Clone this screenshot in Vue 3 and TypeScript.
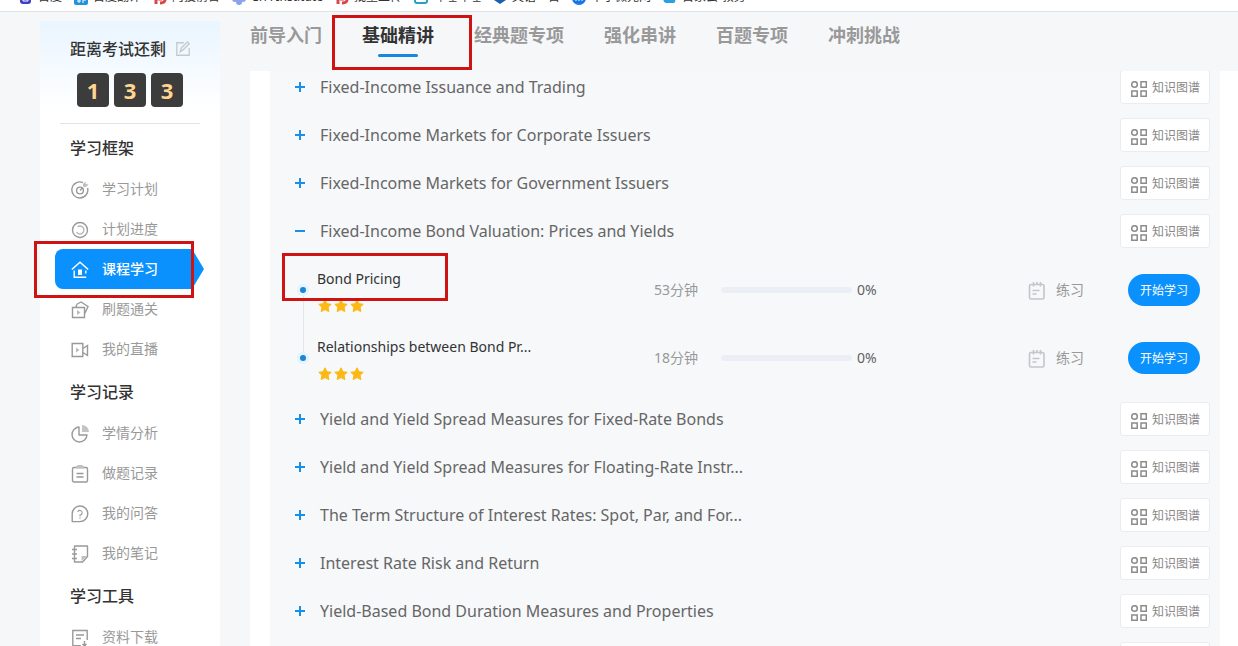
<script setup lang="ts">
import { ref } from 'vue'

interface MenuItem { icon: string; label: string; active?: boolean }
interface MenuGroup { title: string; items: MenuItem[] }
interface Lesson { title: string; minutes: number; percent: number; marked?: boolean }
interface Chapter { title: string; lessons?: Lesson[] }

const bookmarks = [
  { icon: 'paw', label: '百度' },
  { icon: 'translate', label: '百度翻译' },
  { icon: 'red', label: '阿投前台' },
  { icon: 'flower', label: 'CFA Institute' },
  { icon: 'red', label: '批量上传' },
  { icon: 'tv', label: '哔哩哔哩' },
  { icon: 'shield', label: '英语一百' },
  { icon: 'round', label: '中小微元网' },
  { icon: 'cloud', label: '百家云-教务' },
]

const daysLeft = ['1', '3', '3']

const groups: MenuGroup[] = [
  {
    title: '学习框架',
    items: [
      { icon: 'target', label: '学习计划' },
      { icon: 'progress', label: '计划进度' },
      { icon: 'home', label: '课程学习', active: true },
      { icon: 'cards', label: '刷题通关' },
      { icon: 'video', label: '我的直播' },
    ],
  },
  {
    title: '学习记录',
    items: [
      { icon: 'pie', label: '学情分析' },
      { icon: 'clipboard', label: '做题记录' },
      { icon: 'question', label: '我的问答' },
      { icon: 'note', label: '我的笔记' },
    ],
  },
  { title: '学习工具', items: [{ icon: 'download', label: '资料下载' }] },
]

const tabs = ['前导入门', '基础精讲', '经典题专项', '强化串讲', '百题专项', '冲刺挑战']
const activeTab = ref('基础精讲')

const chapters: Chapter[] = [
  { title: 'Fixed-Income Issuance and Trading' },
  { title: 'Fixed-Income Markets for Corporate Issuers' },
  { title: 'Fixed-Income Markets for Government Issuers' },
  {
    title: 'Fixed-Income Bond Valuation: Prices and Yields',
    lessons: [
      { title: 'Bond Pricing', minutes: 53, percent: 0, marked: true },
      { title: 'Relationships between Bond Pr...', minutes: 18, percent: 0 },
    ],
  },
  { title: 'Yield and Yield Spread Measures for Fixed-Rate Bonds' },
  { title: 'Yield and Yield Spread Measures for Floating-Rate Instr...' },
  { title: 'The Term Structure of Interest Rates: Spot, Par, and For...' },
  { title: 'Interest Rate Risk and Return' },
  { title: 'Yield-Based Bond Duration Measures and Properties' },
  { title: '' },
]
</script>

<template>
  <div class="page">
    <nav class="bookmarks">
      <a v-for="b in bookmarks" :key="b.label" href="#" class="bookmark">
        <svg class="fav" viewBox="0 0 14 14" aria-hidden="true">
          <template v-if="b.icon === 'paw'">
            <rect x="1" width="11" height="13" rx="3" fill="#3a3fc4" /><path d="M4 10V7h5v3z" fill="none" stroke="#fff" />
          </template>
          <template v-else-if="b.icon === 'translate'">
            <rect width="14" height="14" rx="2" fill="#2193dc" /><path d="M3 10h4M5 6v6M9 6v6M9 9h3" stroke="#fff" fill="none" />
          </template>
          <path v-else-if="b.icon === 'red'" d="M3 13V4M7 12c5 0 6-3 4-6M5 8h4" stroke="#d9474b" stroke-width="3" fill="none" />
          <g v-else-if="b.icon === 'flower'" fill="#8aa3ea">
            <circle cx="3" cy="8" r="3" /><circle cx="7" cy="11" r="3" /><circle cx="11" cy="8" r="3" /><circle cx="7" cy="5" r="3" />
          </g>
          <rect v-else-if="b.icon === 'tv'" x="1" y="3" width="12" height="9" rx="2" fill="none" stroke="#2c9fc4" stroke-width="2" />
          <path v-else-if="b.icon === 'shield'" d="M1 3l6 2 6-2v6l-6 4-6-4z" fill="#1d5fae" />
          <template v-else-if="b.icon === 'round'">
            <circle cx="7" cy="7" r="7" fill="#1a76e8" /><path d="M4 6v4M7 6v4M10 6v4" stroke="#fff" />
          </template>
          <path v-else d="M3 12a3 3 0 0 1 1-6 4 4 0 0 1 7 1 3 3 0 0 1 0 5z" fill="#2c9fe0" />
        </svg>
        <span>{{ b.label }}</span>
      </a>
    </nav>

    <div class="body">
      <aside class="sidebar">
        <header class="countdown">
          <div class="count-title">
            <span>距离考试还剩</span>
            <button class="edit" type="button" aria-label="编辑">
              <svg viewBox="0 0 18 18"><path d="M10 2H2v14h14V8M6 12l1-4 7-7 2 2-7 7z" fill="none" stroke="#c4c9ce" stroke-width="1.5" /></svg>
            </button>
          </div>
          <div class="digits">
            <span v-for="(d, i) in daysLeft" :key="i" class="digit">{{ d }}</span>
          </div>
        </header>

        <section v-for="g in groups" :key="g.title" class="group">
          <h2>{{ g.title }}</h2>
          <a v-for="m in g.items" :key="m.label" href="#" class="item" :class="{ active: m.active }">
            <svg class="icon" viewBox="0 0 18 18" aria-hidden="true" fill="none" stroke="currentColor" stroke-width="1.4">
              <template v-if="m.icon === 'target'">
                <path d="M12 1.6A8 8 0 1 0 16.6 7" /><circle cx="9" cy="9.5" r="3.4" /><path d="M9 9.5l3-3" />
                <path d="M12 5.5V3l2.5-2.5v2.700H17.500L15 6z" fill="#bbb" stroke="none" />
              </template>
              <template v-else-if="m.icon === 'progress'">
                <circle cx="9" cy="9" r="7.500" /><path d="M6.500 5.800A4 4 0 1 1 5.500 11" opacity=".7" />
              </template>
              <template v-else-if="m.icon === 'home'">
                <path d="M.8 8.500L9 1.200l8.200 7.300M3.200 9.500v6.700h12M14.800 9.500v3" /><path d="M7 8.500h4V14H7z" fill="currentColor" stroke="none" />
              </template>
              <template v-else-if="m.icon === 'cards'">
                <path d="M1.500 6.500h12v10h-12zM5 6l.8-2.200M5.500 3.500L10 1l7 4.500-3.200 7" /><path d="M6 9l3.500 2.500L6 14z" fill="#bbb" stroke="none" />
              </template>
              <template v-else-if="m.icon === 'video'">
                <path d="M1.200 2.500h10.600v13H1.200zM12 7.500l4.500-3v10l-4.500-3" /><path d="M5 6.500L8.500 9 5 11.500z" fill="#bbb" stroke="none" />
              </template>
              <template v-else-if="m.icon === 'pie'">
                <path d="M8 2a7.500 7.500 0 1 0 8 8H8z" stroke-linejoin="round" /><path d="M11 0a7 7 0 0 1 7 7h-7z" fill="#c4c4c4" stroke="none" />
              </template>
              <template v-else-if="m.icon === 'clipboard'">
                <rect x="1.500" y="2.500" width="15" height="14.500" rx="1.500" /><path d="M5.500 8.500h7M5.500 12h7" /><path d="M5 3.500V1.500l2-1.500h4l2 1.500v2z" fill="#c0c0c0" stroke="none" />
              </template>
              <template v-else-if="m.icon === 'question'">
                <path d="M1.200 16.600V9a7.800 7.800 0 1 1 7.800 7.600z" stroke-linejoin="round" /><path d="M6.700 7a2.300 2.300 0 1 1 2.300 3v1.500M9 12.500v1.200" stroke-width="1.100" />
              </template>
              <template v-else-if="m.icon === 'note'">
                <path d="M3.500 1h13v10.500L11.500 17h-8zM1 4.500h5M1 9h5M1 13.500h5" stroke-linejoin="round" /><path d="M10.500 16v-5H16z" fill="#c0c0c0" stroke="none" />
              </template>
              <template v-else>
                <path d="M16.200 11V1.500H1.800v15.200h8M5 6h8M5 9.500h5M13.500 12v5M11.500 15l2 2 2-2" />
              </template>
            </svg>
            <span class="label">{{ m.label }}</span>
            <i v-if="m.active" class="marker marker-menu"></i>
          </a>
        </section>
      </aside>

      <main class="main">
        <nav class="tabs">
          <button v-for="t in tabs" :key="t" type="button" class="tab" :class="{ on: t === activeTab }" @click="activeTab = t">
            {{ t }}
            <i v-if="t === '基础精讲'" class="marker marker-tab"></i>
          </button>
        </nav>

        <div class="panel">
          <div class="list">
            <section v-for="c in chapters" :key="c.title">
              <div class="chapter">
                <button type="button" class="toggle" :aria-label="c.lessons ? '收起' : '展开'">
                  <svg viewBox="0 0 10 10"><path :d="c.lessons ? 'M0 5h10' : 'M0 5h10M5 0v10'" stroke="#1890e8" stroke-width="2" /></svg>
                </button>
                <h3>{{ c.title }}</h3>
                <button type="button" class="graph">
                  <svg viewBox="0 0 16 16" fill="none" stroke="#8c8c8c" stroke-width="1.500">
                    <circle cx="3.500" cy="3.500" r="2.800" /><path d="M10 .8h5.300v5.400H10zM.8 10h5.400v5.300H.8zM10 10h5.300v5.300H10z" />
                  </svg>
                  知识图谱
                </button>
              </div>
              <ul v-if="c.lessons" class="lessons">
                <li v-for="l in c.lessons" :key="l.title" class="lesson">
                  <span class="dot"></span>
                  <div class="info">
                    <h4>{{ l.title }}</h4>
                    <div class="stars">
                      <svg v-for="n in 3" :key="n" viewBox="0 0 14 14"><path d="M7 .8l1.900 3.900 4.300.6-3.100 3 .7 4.300L7 10.600l-3.800 2 .7-4.300-3.100-3 4.300-.6z" fill="#fdb813" stroke="#fdb813" stroke-linejoin="round" /></svg>
                    </div>
                    <i v-if="l.marked" class="marker marker-lesson"></i>
                  </div>
                  <span class="time">{{ l.minutes }}分钟</span>
                  <div class="track"><div class="fill" :style="{ width: l.percent + '%' }"></div></div>
                  <span class="percent">{{ l.percent }}%</span>
                  <a href="#" class="practice">
                    <svg viewBox="0 0 18 18" fill="none" stroke="#c3c6ca" stroke-width="1.600"><rect x="1.500" y="2.500" width="14.500" height="14.500" rx="1.500" /><path d="M5.500 0v4.500M9 0v3M12.500 0v4.500M4.500 8.500h7M4.500 12h4" /></svg>
                    <span class="label">练习</span>
                  </a>
                  <button type="button" class="start">开始学习</button>
                </li>
              </ul>
            </section>
          </div>
        </div>
      </main>
    </div>
  </div>
</template>

<style>
body { margin: 0; background: #f6f7f9; }
</style>

<style scoped>
* { box-sizing: border-box; }
.page {
  display: flex;
  flex-direction: column;
  height: 100vh;
  overflow: hidden;
  background: #f6f7f9;
  color: #333;
  font-family: "Noto Sans", "Noto Sans CJK SC", sans-serif;
  font-size: 14px;
}
button { margin: 0; padding: 0; border: 0; background: none; color: inherit; font: inherit; cursor: pointer; }
a { color: inherit; text-decoration: none; }
h2, h3, h4, ul { margin: 0; padding: 0; font-weight: 400; list-style: none; }
svg { display: block; flex: none; }

.bookmarks {
  flex: none;
  display: flex;
  align-items: flex-end;
  gap: 12px;
  height: 12px;
  padding: 0 19px 6px;
  overflow: hidden;
  background: #fff;
  border-bottom: 1px solid #dfe2e5;
}
.bookmark { display: flex; flex: none; align-items: flex-end; gap: 5px; font-size: 12px; line-height: 16px; white-space: nowrap; }
.fav { width: 14px; height: 14px; }

.body { flex: 1; display: flex; gap: 30px; min-height: 0; padding-left: 40px; }
.sidebar {
  flex: none;
  width: 180px;
  margin-top: 9px;
  background: linear-gradient(#e9f5ff, #fff 90px);
}
.countdown { margin: 0 20px 1px; padding: 16px 0 16px 10px; border-bottom: 1px solid #e2e4e7; }
.count-title { display: flex; align-items: center; gap: 9px; font-size: 16px; font-weight: 500; line-height: 24px; white-space: nowrap; }
.edit svg { width: 16px; height: 16px; }
.digits { display: flex; gap: 5px; padding: 12px 0 0 7px; }
.digit {
  width: 32px;
  height: 34px;
  border-radius: 4px;
  background: #3c3c3c;
  color: #ffd590;
  font-family: "Open Sans", "Noto Sans", sans-serif;
  font-size: 22px;
  font-weight: 700;
  line-height: 34px;
  text-align: center;
}
.group h2 { padding: 2px 0 0 30px; font-size: 16px; font-weight: 500; line-height: 42px; }
.item {
  position: relative;
  display: flex;
  align-items: center;
  gap: 13px;
  height: 40px;
  margin: 0 28px 0 15px;
  padding-left: 16px;
  color: #999;
}
.icon { width: 18px; height: 18px; margin-top: 2px; }
.label { padding-bottom: 2px; }
.active { background: #0a91fd; border-radius: 8px 0 0 8px; color: #fff; font-weight: 500; }
.active::after {
  content: "";
  position: absolute;
  left: 100%;
  top: 0;
  width: 12px;
  height: 100%;
  background: #0a91fd;
  clip-path: polygon(0 0, 100% 50%, 0 100%);
}
.marker { position: absolute; z-index: 3; border: 3px solid #cf1212; pointer-events: none; }
.marker-menu { inset: -8px -2px -9px -21px; }
.marker-tab { inset: -3px -38px -20px -30px; }
.marker-lesson { inset: -5px auto auto -35px; width: 166px; height: 48px; }

.main { flex: 1; display: flex; flex-direction: column; min-width: 0; }
.tabs { flex: none; display: flex; gap: 40px; height: 59px; padding-top: 6px; background: #f6f7f9; }
.tab { position: relative; height: 32px; color: #999; font-size: 18px; font-weight: 700; white-space: nowrap; }
.on { color: #333; }
.on::after {
  content: "";
  position: absolute;
  left: 16px;
  right: 16px;
  top: 36px;
  height: 3px;
  border-radius: 2px;
  background: #1788e0;
}
.panel { flex: 1; min-height: 0; overflow: hidden; padding: 0 18px 0 20px; background: #fff; }
.list { margin-top: -8px; padding: 0 10px 0 25px; background: #f6f8fa; }
.chapter { display: flex; align-items: center; gap: 15px; height: 48px; }
.toggle svg { width: 10px; height: 10px; }
h3 { flex: 1; min-width: 0; color: #666; font-size: 16px; line-height: 24px; white-space: nowrap; }
.graph {
  display: flex;
  align-items: center;
  gap: 5px;
  width: 90px;
  height: 34px;
  padding-left: 10px;
  border: 1px solid #e9ecf0;
  border-radius: 3px;
  background: #fff;
  color: #888;
  font-size: 12px;
  white-space: nowrap;
}
.graph svg { width: 16px; height: 16px; margin-top: 4px; }
.lessons { padding: 1px 0 3px; }
.lesson { position: relative; display: flex; align-items: center; height: 68px; padding: 0 10px 0 5px; color: #999; }
.dot { position: relative; z-index: 1; width: 6px; height: 6px; border-radius: 3px; background: #1b86d2; box-shadow: 0 0 0 3px #e3f3ff; }
.lesson:not(:last-child)::before {
  content: "";
  position: absolute;
  left: 8px;
  top: 50%;
  width: 1px;
  height: 100%;
  background: #e3e6ea;
}
.info { position: relative; width: 337px; padding: 9px 0; margin-left: 11px; }
h4 { color: #333; font-size: 14px; line-height: 24px; white-space: nowrap; }
.stars { display: flex; gap: 2px; padding: 8px 0 0 1px; }
.stars svg { width: 14px; height: 14px; }
.time { width: 67px; padding-bottom: 2px; }
.track { width: 131px; height: 6px; border-radius: 3px; overflow: hidden; background: #ebeef5; }
.fill { height: 100%; background: #0a91fd; }
.percent { margin-left: 5px; padding-bottom: 2px; color: #606266; }
.practice { display: flex; align-items: center; gap: 10px; margin-left: auto; margin-right: 44px; }
.practice svg { width: 18px; height: 18px; margin-top: 2px; }
.start { width: 72px; height: 32px; border-radius: 16px; background: #0a91fd; color: #fff; font-size: 12px; }
</style>
